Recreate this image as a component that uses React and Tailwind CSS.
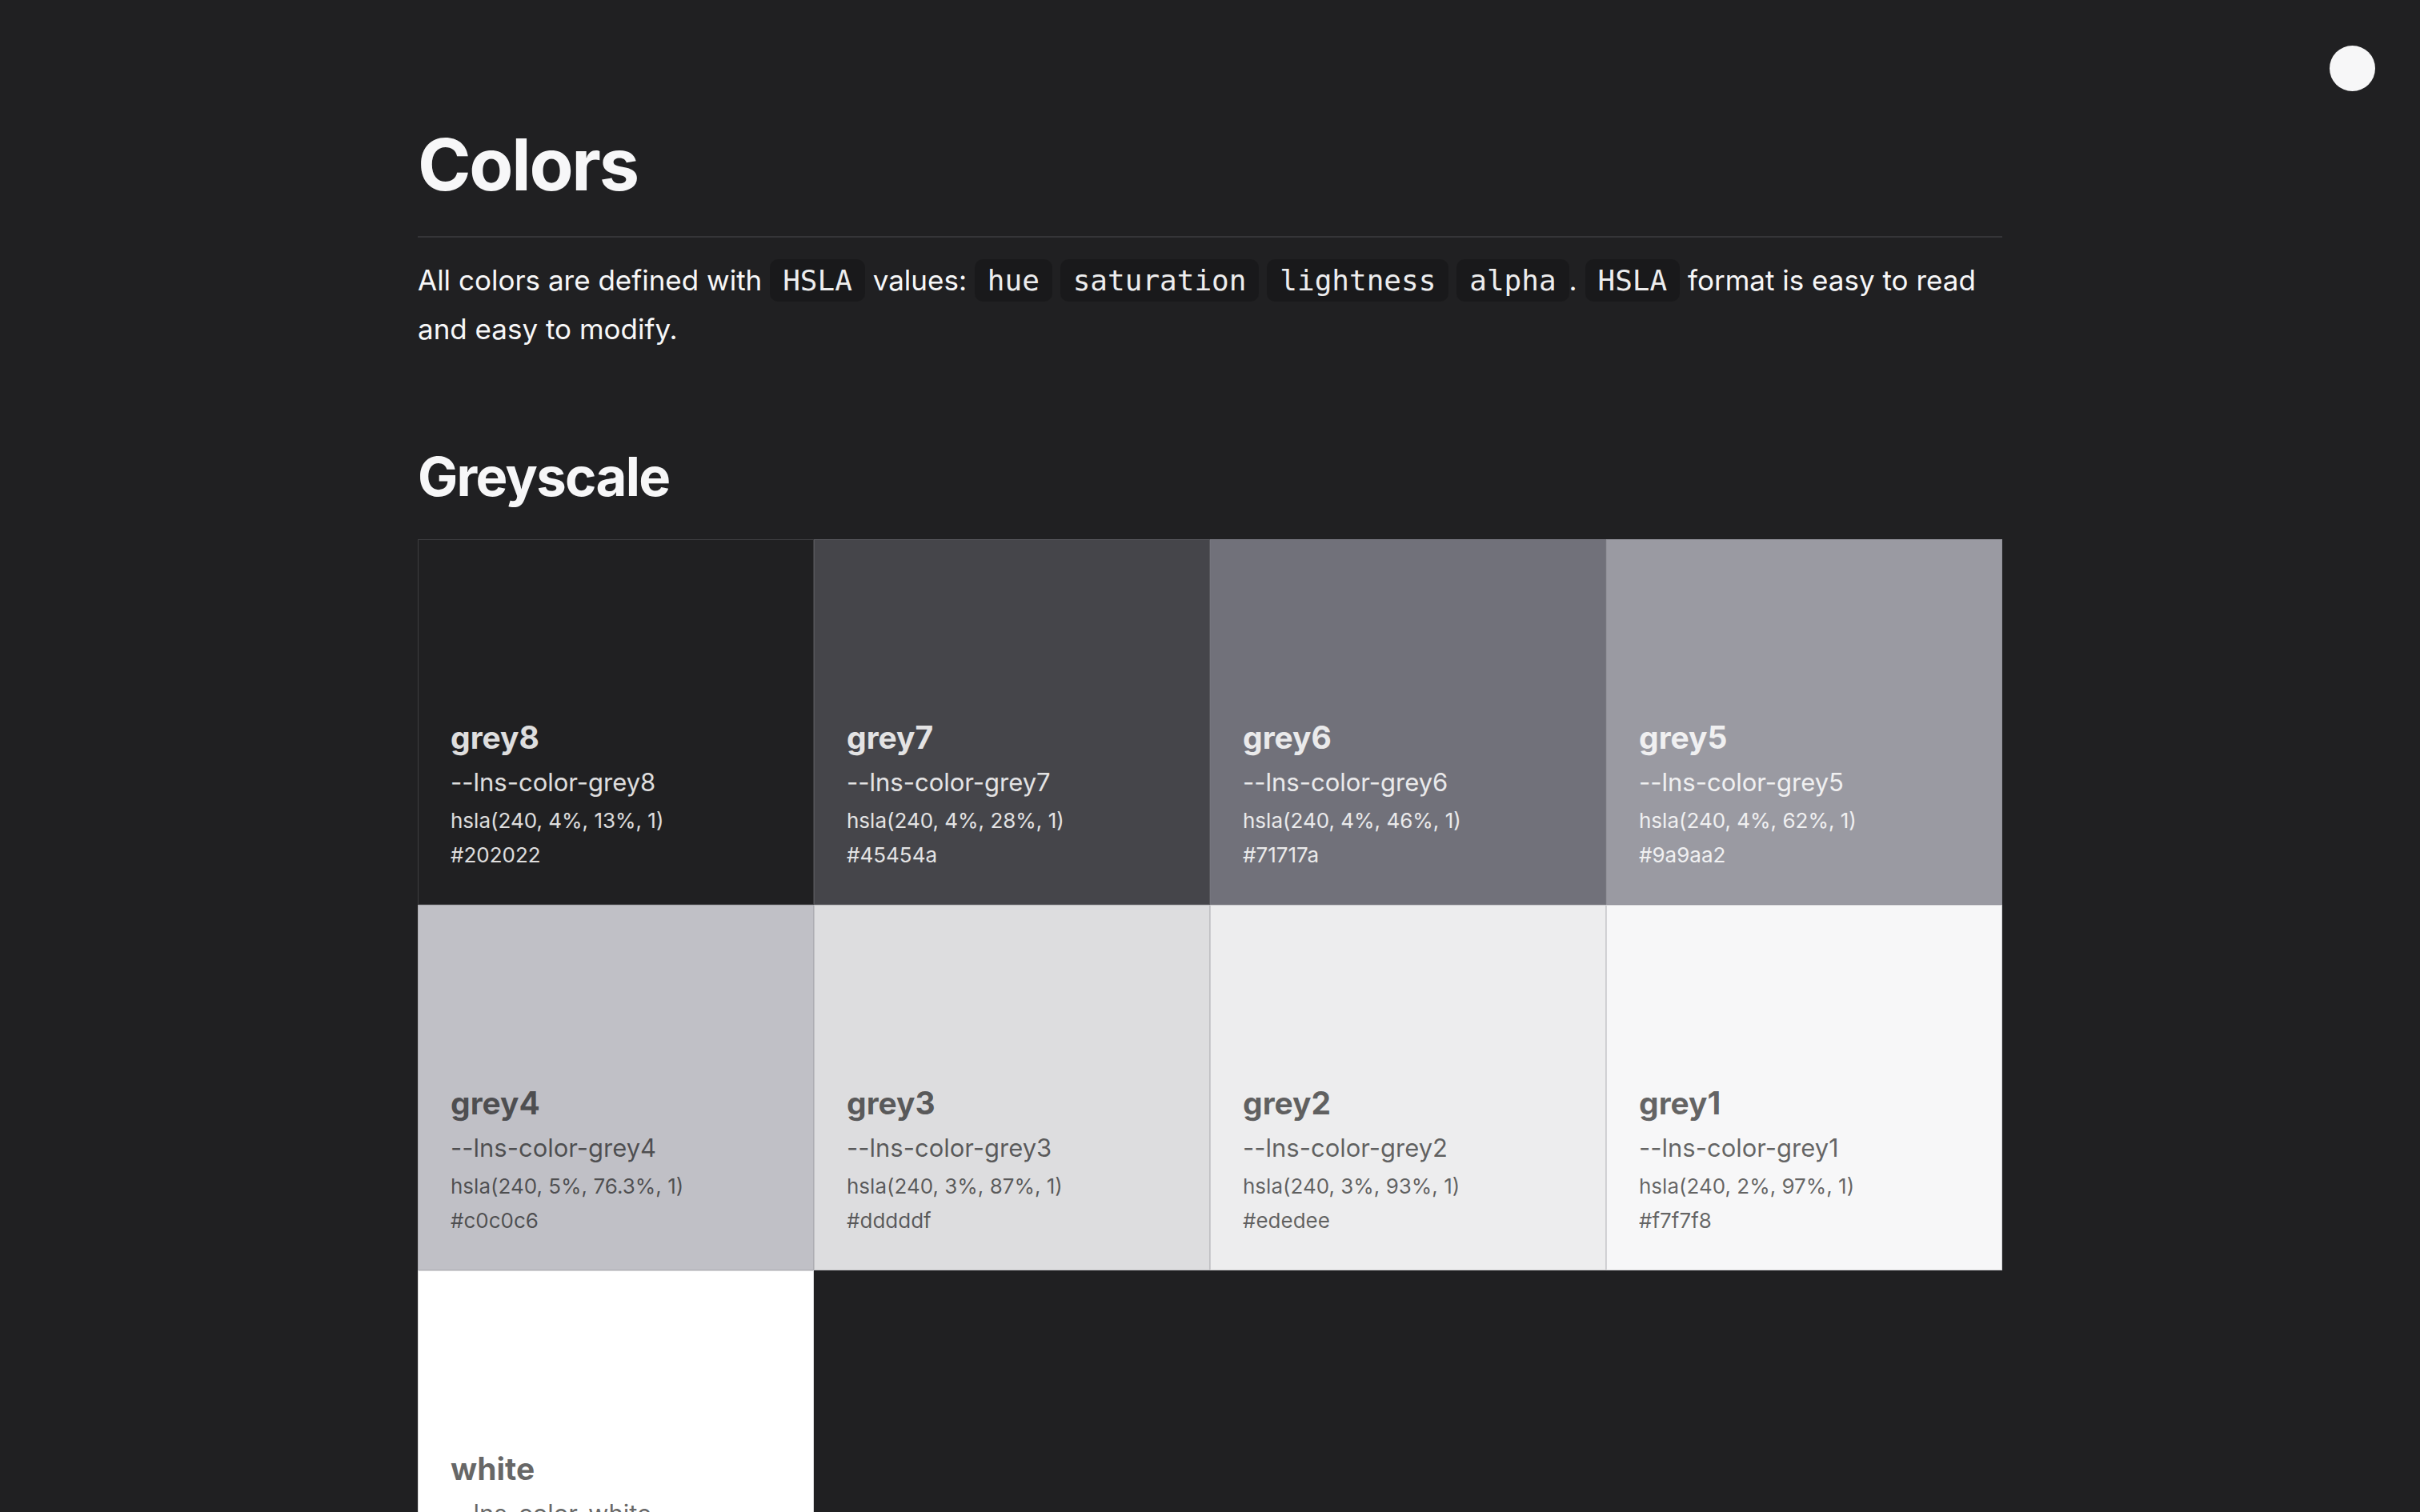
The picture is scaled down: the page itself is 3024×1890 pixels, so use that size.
import React from "react";

const greys = [
  { name: "grey8", hsla: "hsla(240, 4%, 13%, 1)", hex: "#202022", bg: "bg-[#202022]", text: "text-white/85" },
  { name: "grey7", hsla: "hsla(240, 4%, 28%, 1)", hex: "#45454a", bg: "bg-[#45454a]", text: "text-white/85" },
  { name: "grey6", hsla: "hsla(240, 4%, 46%, 1)", hex: "#71717a", bg: "bg-[#71717a]", text: "text-white/85" },
  { name: "grey5", hsla: "hsla(240, 4%, 62%, 1)", hex: "#9a9aa2", bg: "bg-[#9a9aa2]", text: "text-white/85" },
  { name: "grey4", hsla: "hsla(240, 5%, 76.3%, 1)", hex: "#c0c0c6", bg: "bg-[#c0c0c6]", text: "text-black/60" },
  { name: "grey3", hsla: "hsla(240, 3%, 87%, 1)", hex: "#dddddf", bg: "bg-[#dddddf]", text: "text-black/60" },
  { name: "grey2", hsla: "hsla(240, 3%, 93%, 1)", hex: "#ededee", bg: "bg-[#ededee]", text: "text-black/60" },
  { name: "grey1", hsla: "hsla(240, 2%, 97%, 1)", hex: "#f7f7f8", bg: "bg-[#f7f7f8]", text: "text-black/60" },
  { name: "white", hsla: "hsla(0, 0%, 100%, 1)", hex: "#ffffff", bg: "bg-white", text: "text-black/60" },
];

const Code = ({ children }) => (
  <code className="rounded-[10px] bg-black/20 px-4 py-[6px] font-['DejaVu_Sans_Mono',monospace] text-[36px] text-[#ededee]">
    {children}
  </code>
);

const Swatch = ({ c }) => (
  <div
    className={`flex h-[457px] flex-col justify-end border border-[rgba(128,128,136,0.3)] px-10 pb-10 ${c.bg} ${c.text}`}
  >
    <div className="text-[39px] font-bold leading-[60px]">{c.name}</div>
    <div className="text-[31px] leading-[52px]">--lns-color-{c.name}</div>
    <div className="text-[26px] leading-[43px]">{c.hsla}</div>
    <div className="text-[26px] leading-[43px]">{c.hex}</div>
  </div>
);

export default function App() {
  return (
    <div className="relative min-h-screen bg-[#202022] pb-40 font-['Inter',sans-serif] text-[#f7f7f8]">
      {/* theme toggle dot */}
      <div className="absolute right-[56px] top-[57px] h-[57px] w-[57px] rounded-full bg-[#f7f7f8]" />

      <div className="mx-auto w-[1980px] pt-[161px]">
        <h1 className="text-[90px] font-bold leading-[90px] tracking-tight">Colors</h1>
        <div className="mt-[44px] h-[2px] bg-[#353538]" />
        <p className="mt-[23px] text-[35px] leading-[60px]">
          All colors are defined with <Code>HSLA</Code> values: <Code>hue</Code>{" "}
          <Code>saturation</Code> <Code>lightness</Code> <Code>alpha</Code>. <Code>HSLA</Code>{" "}
          format is easy to read and easy to modify.
        </p>

        <h2 className="mt-[122px] text-[67px] font-bold leading-[66px] tracking-tight">Greyscale</h2>
        <div className="mt-[45px] grid grid-cols-4">
          {greys.map((c) => (
            <Swatch key={c.name} c={c} />
          ))}
        </div>
      </div>
    </div>
  );
}
